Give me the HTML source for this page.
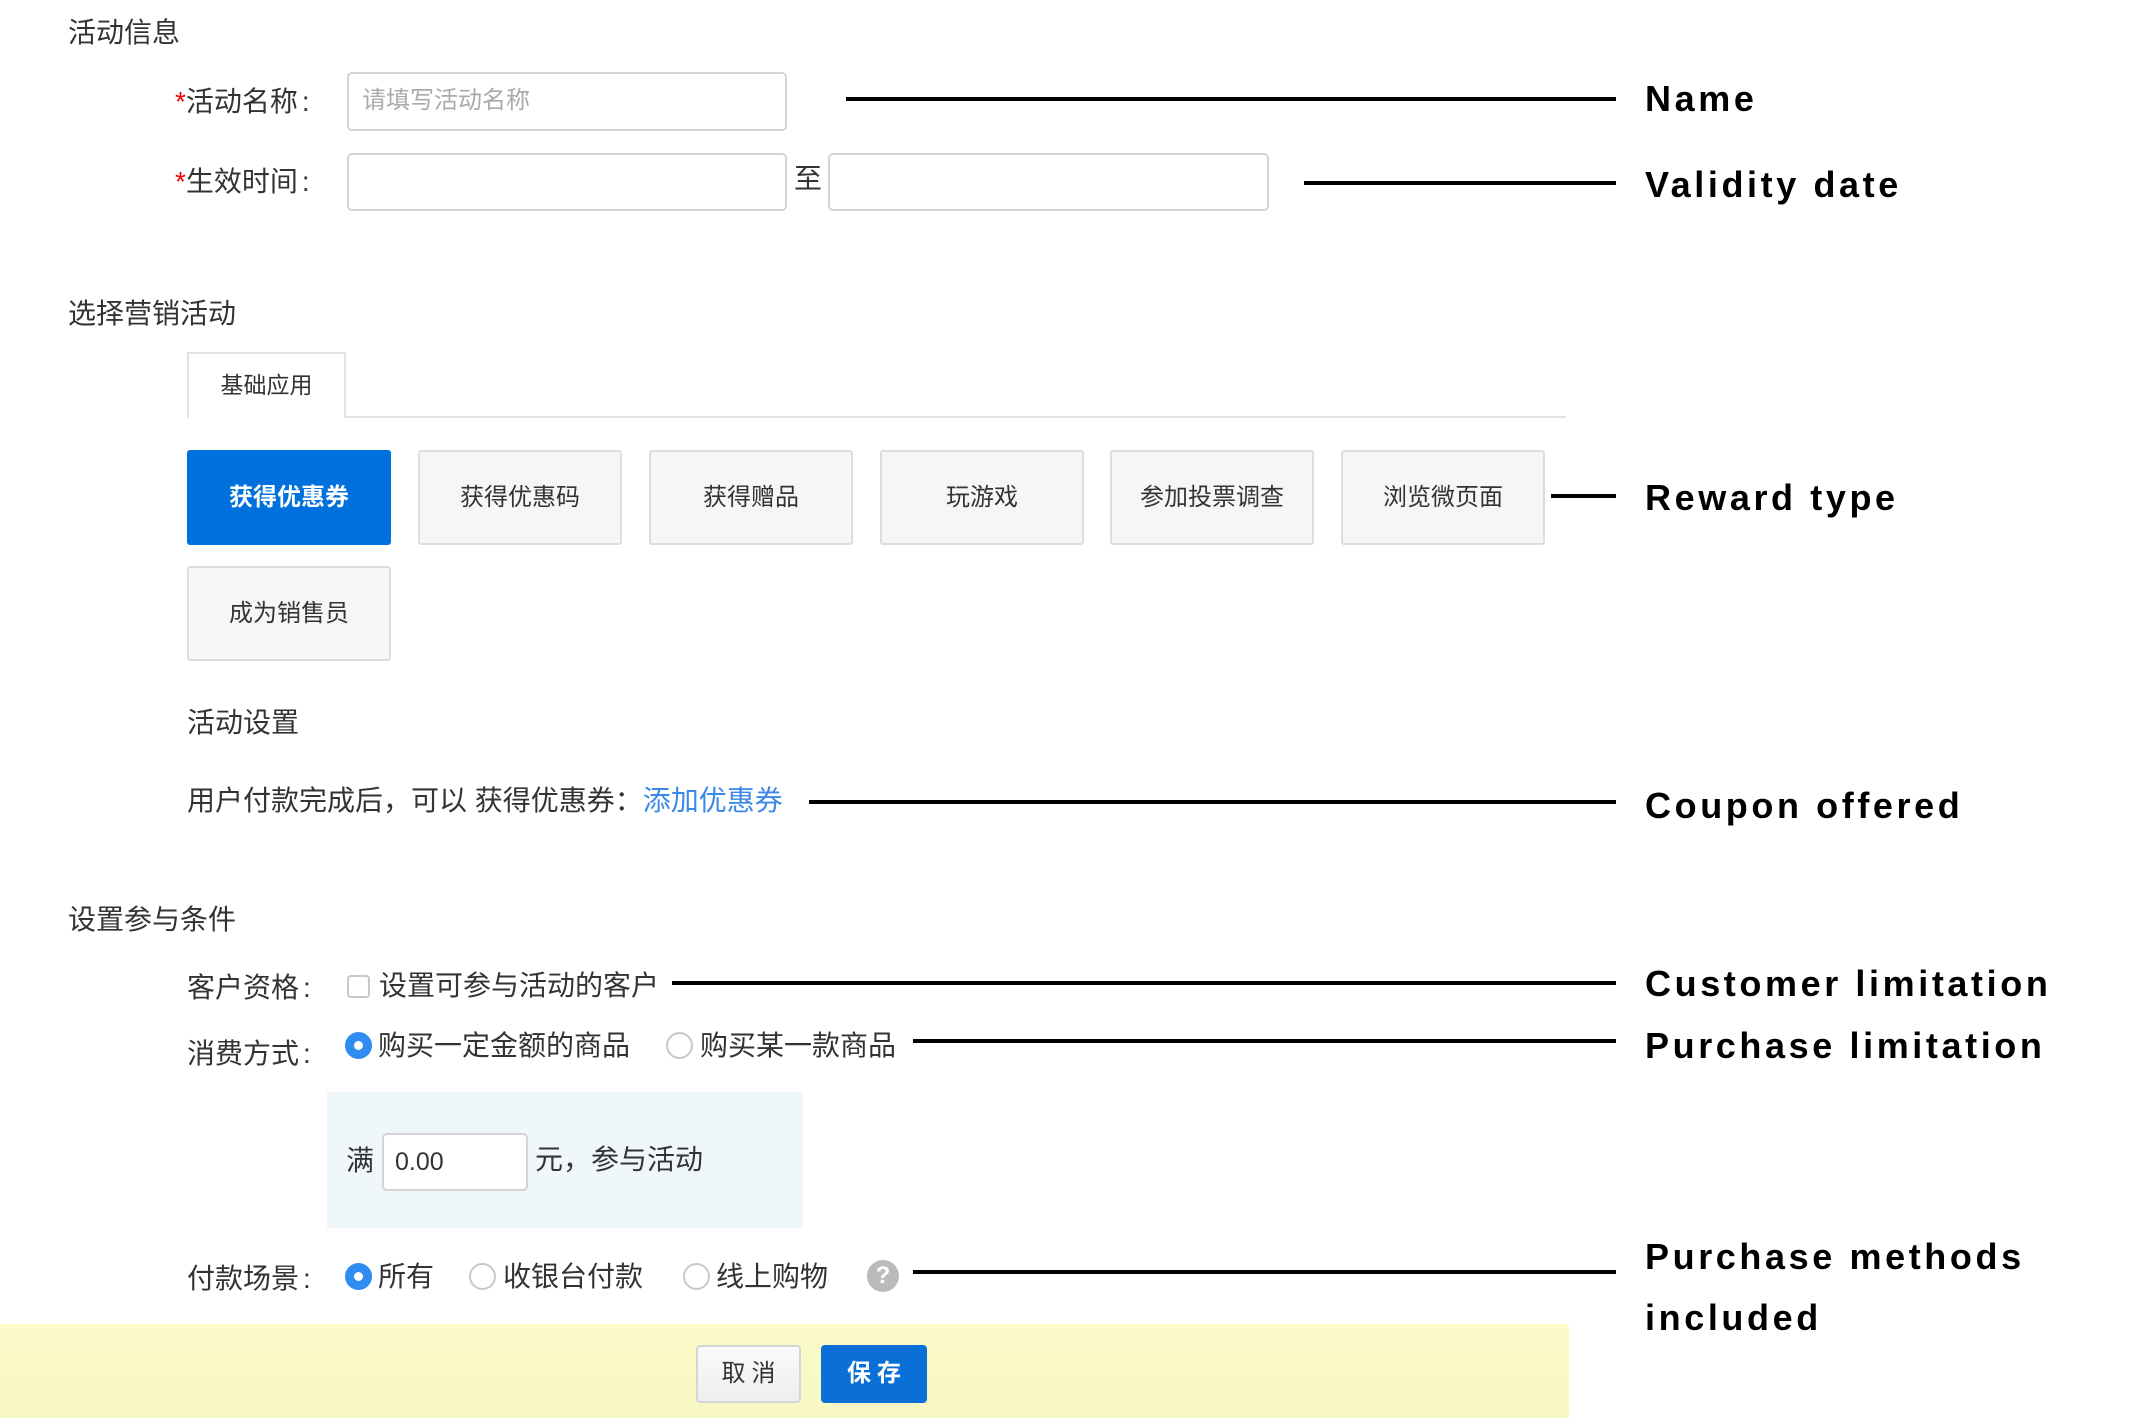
<!DOCTYPE html>
<html><head><meta charset="utf-8"><style>
*{margin:0;padding:0;box-sizing:border-box}
body{width:2149px;height:1418px;background:#fff;position:relative;overflow:hidden;font-family:"Liberation Sans","Noto Sans CJK SC",sans-serif;color:#333}
.a{position:absolute;white-space:nowrap}
.t{font-size:28px;line-height:40px;height:40px}
.inp{position:absolute;border:2px solid #d4d4d4;border-radius:5px;background:#fff}
.btn{position:absolute;top:450px;width:204px;height:95px;background:#f6f6f6;border:2px solid #ddd;border-radius:3px;font-size:24px;line-height:91px;text-align:center;color:#333}
.ln{position:absolute;height:4px;background:#000}
.en{position:absolute;font-family:"Liberation Sans",Arial,sans-serif;font-weight:bold;font-size:36px;line-height:36px;letter-spacing:3.6px;color:#000;white-space:nowrap}
.rad{position:absolute;width:27px;height:27px;border-radius:50%;border:2px solid #c8c8c8;background:#fff}
.rad.on{background:#2f8cf0;border-color:#2f8cf0}
.rad.on:after{content:"";position:absolute;left:7px;top:7px;width:9px;height:9px;border-radius:50%;background:#fff}
</style></head><body>
<div class="a t" style="left:68px;top:13px">活动信息</div>
<div class="a t" style="left:175px;top:82px"><span style="color:#e00">*</span>活动名称<span style="margin-left:4px">:</span></div>
<div class="inp" style="left:347px;top:72px;width:440px;height:59px"></div>
<div class="a" style="left:362px;top:82px;font-size:24px;line-height:38px;color:#aaa">请填写活动名称</div>
<div class="a t" style="left:175px;top:162px"><span style="color:#e00">*</span>生效时间<span style="margin-left:4px">:</span></div>
<div class="inp" style="left:347px;top:153px;width:440px;height:58px"></div>
<div class="a t" style="left:794px;top:159px">至</div>
<div class="inp" style="left:828px;top:153px;width:441px;height:58px"></div>

<div class="a t" style="left:68px;top:294px">选择营销活动</div>
<div class="a" style="left:187px;top:416px;width:1379px;height:2px;background:#e2e2e2"></div>
<div class="a" style="left:187px;top:352px;width:159px;height:66px;border:2px solid #e2e2e2;border-bottom:none;background:#fff;font-size:23px;line-height:62px;text-align:center">基础应用</div>
<div class="btn" style="left:187px;background:#0071dc;border-color:#0071dc;color:#fff;font-weight:bold">获得优惠券</div>
<div class="btn" style="left:418px">获得优惠码</div>
<div class="btn" style="left:649px">获得赠品</div>
<div class="btn" style="left:880px">玩游戏</div>
<div class="btn" style="left:1110px">参加投票调查</div>
<div class="btn" style="left:1341px">浏览微页面</div>
<div class="btn" style="left:187px;top:566px">成为销售员</div>

<div class="a t" style="left:187px;top:703px">活动设置</div>
<div class="a t" style="left:187px;top:781px">用户付款完成后，可以 获得优惠券：<span style="color:#3a88e8">添加优惠券</span></div>

<div class="a t" style="left:68px;top:900px">设置参与条件</div>
<div class="a t" style="left:187px;top:968px">客户资格<span style="margin-left:4px">:</span></div>
<div class="a" style="left:347px;top:975px;width:23px;height:23px;border:2px solid #c8c8c8;border-radius:4px"></div>
<div class="a t" style="left:379px;top:966px">设置可参与活动的客户</div>
<div class="a t" style="left:187px;top:1034px">消费方式<span style="margin-left:4px">:</span></div>
<div class="rad on" style="left:345px;top:1032px"></div>
<div class="a t" style="left:378px;top:1026px">购买一定金额的商品</div>
<div class="rad" style="left:666px;top:1032px"></div>
<div class="a t" style="left:700px;top:1026px">购买某一款商品</div>

<div class="a" style="left:327px;top:1092px;width:476px;height:136px;background:#f0f7fa"></div>
<div class="a t" style="left:346px;top:1141px">满</div>
<div class="inp" style="left:382px;top:1133px;width:146px;height:58px"></div>
<div class="a" style="left:395px;top:1143px;font-size:25px;line-height:38px;color:#333">0.00</div>
<div class="a t" style="left:535px;top:1140px">元，参与活动</div>

<div class="a t" style="left:187px;top:1259px">付款场景<span style="margin-left:4px">:</span></div>
<div class="rad on" style="left:345px;top:1263px"></div>
<div class="a t" style="left:378px;top:1257px">所有</div>
<div class="rad" style="left:469px;top:1263px"></div>
<div class="a t" style="left:503px;top:1257px">收银台付款</div>
<div class="rad" style="left:683px;top:1263px"></div>
<div class="a t" style="left:716px;top:1257px">线上购物</div>
<div class="a" style="left:867px;top:1260px;width:32px;height:32px;border-radius:50%;background:#bbb;color:#fff;font-weight:bold;font-size:24px;line-height:32px;text-align:center">?</div>

<div class="a" style="left:0;top:1324px;width:1569px;height:94px;background:linear-gradient(#fbfbcb,#f7f7c4)"></div>
<div class="a" style="left:696px;top:1345px;width:105px;height:58px;border:2px solid #d5d5d5;border-radius:4px;background:linear-gradient(#fafafa,#eee);font-size:24px;line-height:54px;text-align:center;letter-spacing:6px;padding-left:6px">取消</div>
<div class="a" style="left:821px;top:1345px;width:106px;height:58px;border-radius:4px;background:#0a6fd6;color:#fff;font-size:24px;line-height:58px;text-align:center;letter-spacing:6px;padding-left:6px;font-weight:bold">保存</div>

<div class="ln" style="left:846px;top:97px;width:770px"></div>
<div class="en" style="left:1645px;top:81px">Name</div>
<div class="ln" style="left:1304px;top:181px;width:312px"></div>
<div class="en" style="left:1645px;top:167px">Validity date</div>
<div class="ln" style="left:1551px;top:494px;width:65px"></div>
<div class="en" style="left:1645px;top:480px">Reward type</div>
<div class="ln" style="left:809px;top:800px;width:807px"></div>
<div class="en" style="left:1645px;top:788px">Coupon offered</div>
<div class="ln" style="left:672px;top:981px;width:944px"></div>
<div class="en" style="left:1645px;top:966px">Customer limitation</div>
<div class="ln" style="left:913px;top:1039px;width:703px"></div>
<div class="en" style="left:1645px;top:1028px">Purchase limitation</div>
<div class="ln" style="left:913px;top:1270px;width:703px"></div>
<div class="en" style="left:1645px;top:1239px">Purchase methods</div>
<div class="en" style="left:1645px;top:1300px">included</div>
</body></html>
